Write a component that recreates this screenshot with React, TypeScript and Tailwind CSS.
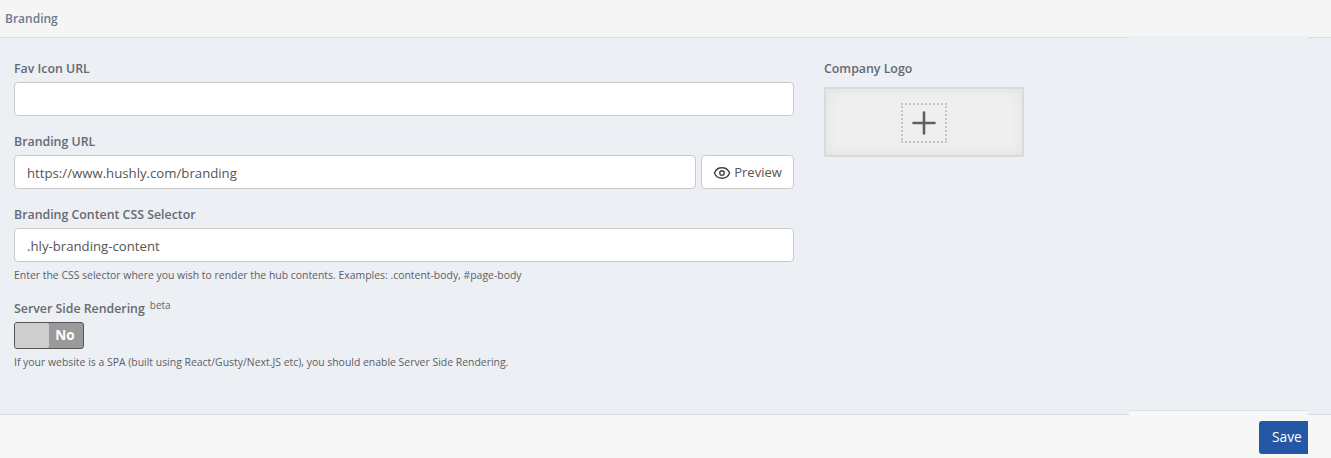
import React from 'react';
import { Eye, Plus } from 'lucide-react';

const labelClass = 'block text-[12.35px] leading-[18px] font-semibold text-[#666a70] mb-[4px]';
const inputClass =
    'block w-full h-[34px] rounded-[4px] border border-[#c9c9c9] bg-white px-3 pt-[2px] text-[13.2px] text-[#555] outline-none';
const helpClass = 'text-[10.43px] leading-[14px] text-[#5c6066]';

const App: React.FC = () => {
    return (
        <div
            className="relative w-[1331px] h-[458px] overflow-hidden flex flex-col bg-[#eceff4]"
            style={{ fontFamily: '"Open Sans", "Noto Sans", sans-serif' }}
        >
            <div className="h-[38px] shrink-0 bg-[#f5f5f5] border-b border-[#d9dde1] px-[5px] flex items-center">
                <span className="text-[12px] font-semibold text-[#6b7b8f]">Branding</span>
            </div>

            <main className="flex-grow flex pl-[14px] pt-[22px]">
                <div className="w-[780px] shrink-0">
                    <label className={labelClass}>Fav Icon URL</label>
                    <input className={inputClass} />

                    <label className={`${labelClass} mt-[17px]`}>Branding URL</label>
                    <div className="flex gap-[5px]">
                        <input className={`${inputClass} flex-1`} defaultValue="https://www.hushly.com/branding" />
                        <button className="w-[93px] h-[34px] shrink-0 rounded-[4px] border border-[#c9c9c9] bg-white pt-[1px] flex items-center justify-center gap-[3px] text-[13px] text-[#555]">
                            <Eye size={18} strokeWidth={1.9} className="text-[#444]" />
                            Preview
                        </button>
                    </div>

                    <label className={`${labelClass} mt-[17px]`}>Branding Content CSS Selector</label>
                    <input className={inputClass} defaultValue=".hly-branding-content" />
                    <p className={`${helpClass} mt-[6px]`}>
                        Enter the CSS selector where you wish to render the hub contents. Examples: .content-body, #page-body
                    </p>

                    <div className="mt-[18px] flex items-start text-[12.35px] leading-[18px] font-semibold text-[#666a70]">
                        Server Side Rendering
                        <span className="ml-[5px] -mt-[1px] text-[10px] leading-[12px] font-normal">beta</span>
                    </div>
                    <div className="mt-[4px] w-[70px] h-[27px] rounded-[3px] border border-[#555] bg-[#9a9a9a] flex overflow-hidden">
                        <div className="w-[34px] bg-[#cfcfcf] rounded-r-[2px]" />
                        <div className="flex-1 flex items-center justify-center pr-[2px] text-[13.5px] font-bold text-white">No</div>
                    </div>
                    <p className={`${helpClass} mt-[6px]`}>
                        If your website is a SPA (built using React/Gusty/Next.JS etc), you should enable Server Side Rendering.
                    </p>
                </div>

                <div className="ml-[30px] w-[200px]">
                    <label className={`${labelClass} mb-[9px]`}>Company Logo</label>
                    <div className="w-[200px] h-[70px] border-2 border-[#dadada] bg-[#efefef] shadow-[inset_0_0_14px_rgba(0,0,0,0.06)] flex items-center justify-center">
                        <div className="w-[46px] h-[40px] mt-[2px] border-2 border-dotted border-[#c4c4c4] flex items-center justify-center text-[#5f5f5f]">
                            <Plus size={36} strokeWidth={1.7} />
                        </div>
                    </div>
                </div>
            </main>

            <footer className="h-[44px] shrink-0 bg-[#f7f7f7] border-t border-[#d9dde1] pr-[23px] pt-[6px] flex justify-end items-start">
                <button className="w-[49px] h-[33px] rounded-l-[3px] bg-[#2558a4] text-white text-[13.8px] text-left pl-[13px] whitespace-nowrap overflow-hidden">Save</button>
            </footer>

            <div className="absolute left-[1129px] top-[36px] w-[179px] h-[2px] bg-[#eceff4]" />
            <div className="absolute left-[1129px] top-[410px] w-[179px] h-[5px] bg-[#f7f7f7] border-t border-[#dcdfe4]" />
        </div>
    );
};

export default App;
